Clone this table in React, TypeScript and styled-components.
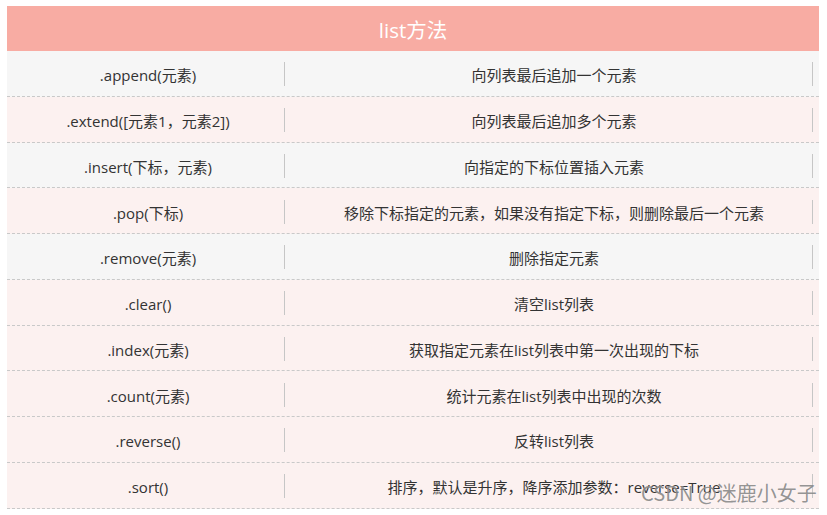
import React from "react";
import styled, { createGlobalStyle } from "styled-components";

const Global = createGlobalStyle`
  html, body { margin: 0; padding: 0; background: #ffffff; }
  body { font-family: "Open Sans", "Noto Sans CJK SC", sans-serif; }
`;

const Page = styled.div`
  padding: 6px 8px 0 7px;
  width: 827px;
  box-sizing: border-box;
`;

const Table = styled.div`
  position: relative;
  width: 812px;
`;

const Header = styled.div`
  height: 45px;
  background: #f8aca3;
  color: #ffffff;
  font-family: "Open Sans", "Noto Sans CJK SC", sans-serif;
  font-size: 20.5px;
  display: flex;
  align-items: center;
  justify-content: center;
  box-sizing: border-box;
`;

const Row = styled.div<{ $pink: boolean }>`
  display: grid;
  grid-template-columns: 278px 528px 1fr;
  align-items: center;
  height: 45.75px;
  box-sizing: border-box;
  border-bottom: 1px dashed #c9c9c9;
  background: ${(p) => (p.$pink ? "#fcf1f0" : "#f6f6f6")};
  padding-top: 2px;
`;

const Cell = styled.div<{ $pad: number }>`
  height: 24px;
  display: flex;
  align-items: center;
  justify-content: center;
  padding-left: ${(p) => p.$pad}px;
  padding-top: 1px;
  box-sizing: border-box;
  font-family: "Open Sans", "Noto Sans CJK SC", sans-serif;
  font-size: 15px;
  color: #333333;
  white-space: nowrap;
  border-right: 1px solid #c6c6c6;
`;

const Watermark = styled.div`
  position: absolute;
  left: 634px;
  top: 472px;
  font-family: "Noto Sans CJK SC", "Noto Sans", sans-serif;
  font-size: 20px;
  color: rgba(120, 120, 120, 0.8);
  text-shadow: 0 0 1px rgba(255, 255, 255, 0.6);
  white-space: nowrap;
`;

const rows: [string, string][] = [
  [".append(元素)", "向列表最后追加一个元素"],
  [".extend([元素1，元素2])", "向列表最后追加多个元素"],
  [".insert(下标，元素)", "向指定的下标位置插入元素"],
  [".pop(下标)", "移除下标指定的元素，如果没有指定下标，则删除最后一个元素"],
  [".remove(元素)", "删除指定元素"],
  [".clear()", "清空list列表"],
  [".index(元素)", "获取指定元素在list列表中第一次出现的下标"],
  [".count(元素)", "统计元素在list列表中出现的次数"],
  [".reverse()", "反转list列表"],
  [".sort()", "排序，默认是升序，降序添加参数：reverse=True"],
];

export default function App() {
  return (
    <>
      <Global />
      <Page>
        <Table>
          <Header>list方法</Header>
          {rows.map(([m, d], i) => (
            <Row key={m} $pink={!(i === 0 || i === 2 || i === 4)}>
              <Cell $pad={5}>{m}</Cell>
              <Cell $pad={11}>{d}</Cell>
            </Row>
          ))}
          <Watermark>CSDN @迷鹿小女子</Watermark>
        </Table>
      </Page>
    </>
  );
}
